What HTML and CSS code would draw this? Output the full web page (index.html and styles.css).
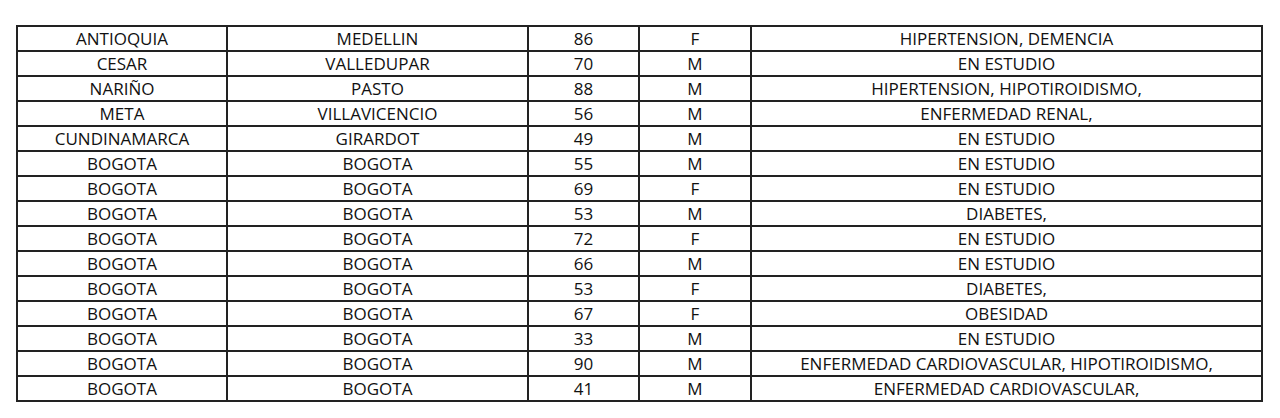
FILE: index.html
```html
<!DOCTYPE html>
<html lang="es">
<head>
<meta charset="utf-8">
<link rel="stylesheet" href="styles.css">
</head>
<body>
<div class="page">
<table class="data">
<colgroup>
<col class="c-dep"><col class="c-mun"><col class="c-age"><col class="c-sex"><col class="c-cond">
</colgroup>
<tbody>
<tr><td>ANTIOQUIA</td><td>MEDELLIN</td><td>86</td><td>F</td><td>HIPERTENSION, DEMENCIA</td></tr>
<tr><td>CESAR</td><td>VALLEDUPAR</td><td>70</td><td>M</td><td>EN ESTUDIO</td></tr>
<tr><td>NARIÑO</td><td>PASTO</td><td>88</td><td>M</td><td>HIPERTENSION, HIPOTIROIDISMO,</td></tr>
<tr><td>META</td><td>VILLAVICENCIO</td><td>56</td><td>M</td><td>ENFERMEDAD RENAL,</td></tr>
<tr><td>CUNDINAMARCA</td><td>GIRARDOT</td><td>49</td><td>M</td><td>EN ESTUDIO</td></tr>
<tr><td>BOGOTA</td><td>BOGOTA</td><td>55</td><td>M</td><td>EN ESTUDIO</td></tr>
<tr><td>BOGOTA</td><td>BOGOTA</td><td>69</td><td>F</td><td>EN ESTUDIO</td></tr>
<tr><td>BOGOTA</td><td>BOGOTA</td><td>53</td><td>M</td><td>DIABETES,</td></tr>
<tr><td>BOGOTA</td><td>BOGOTA</td><td>72</td><td>F</td><td>EN ESTUDIO</td></tr>
<tr><td>BOGOTA</td><td>BOGOTA</td><td>66</td><td>M</td><td>EN ESTUDIO</td></tr>
<tr><td>BOGOTA</td><td>BOGOTA</td><td>53</td><td>F</td><td>DIABETES,</td></tr>
<tr><td>BOGOTA</td><td>BOGOTA</td><td>67</td><td>F</td><td>OBESIDAD</td></tr>
<tr><td>BOGOTA</td><td>BOGOTA</td><td>33</td><td>M</td><td>EN ESTUDIO</td></tr>
<tr><td>BOGOTA</td><td>BOGOTA</td><td>90</td><td>M</td><td>ENFERMEDAD CARDIOVASCULAR, HIPOTIROIDISMO,</td></tr>
<tr><td>BOGOTA</td><td>BOGOTA</td><td>41</td><td>M</td><td>ENFERMEDAD CARDIOVASCULAR,</td></tr>
</tbody>
</table>
</div>
</body>
</html>
```

FILE: styles.css
```css
html, body {
  margin: 0;
  padding: 0;
  background: #ffffff;
}
.page {
  padding: 25px 0 0 16px;
}
.data {
  border-collapse: collapse;
  table-layout: fixed;
  width: 1245px;
  font-family: "Open Sans", "Liberation Sans", sans-serif;
  font-size: 17px;
  color: #111;
}
.c-dep { width: 210px; }
.c-mun { width: 301px; }
.c-age { width: 111px; }
.c-sex { width: 112px; }
.c-cond { width: 511px; }
.data td {
  border: 2px solid #222;
  height: 23px;
  padding: 0;
  text-align: center;
  vertical-align: middle;
  line-height: 23px;
  white-space: nowrap;
}
```
